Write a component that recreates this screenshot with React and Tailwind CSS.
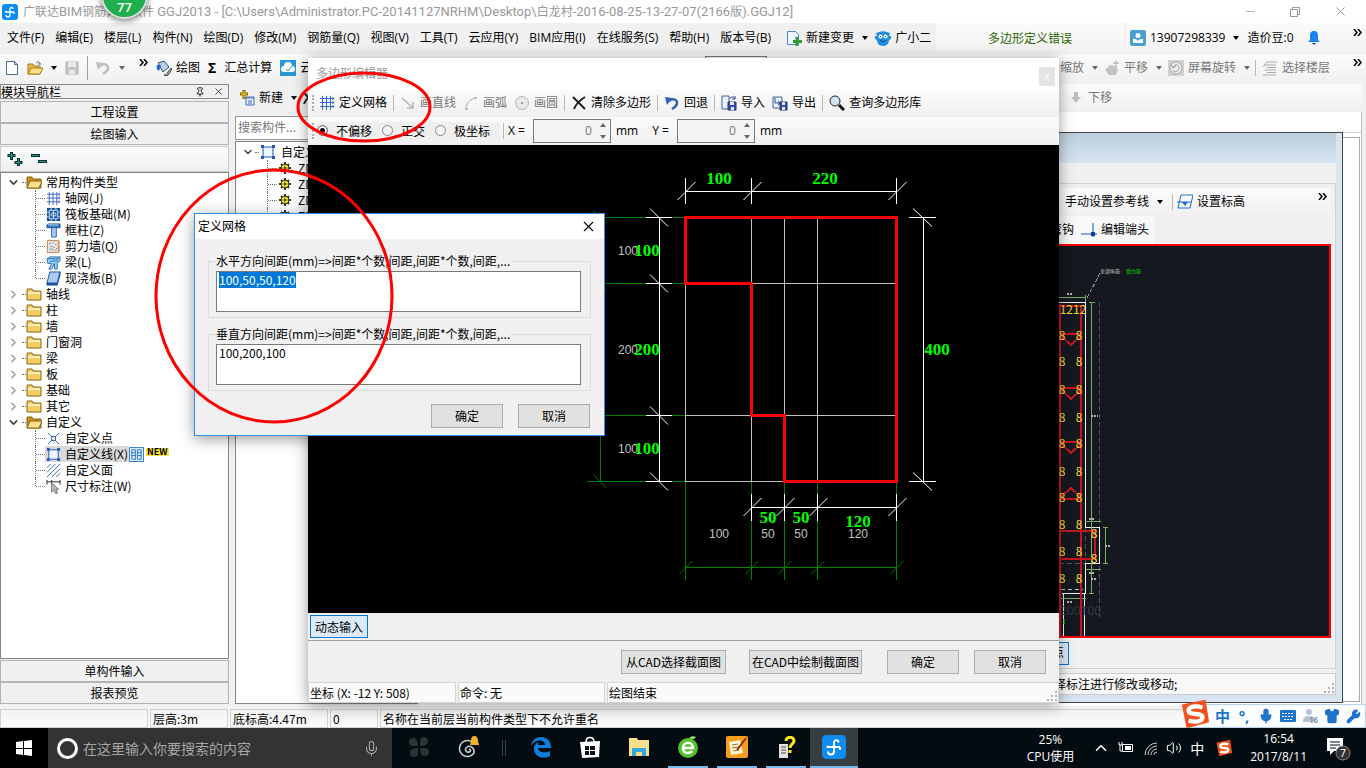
import { useEffect, useRef } from 'react'
import { ChevronDown, ChevronRight, ChevronUp, Mic, Minus, Pin, Shirt, Volume2, Wrench, X } from 'lucide-react'

const UI = "font-['Open_Sans','Noto_Sans_CJK_SC',sans-serif]"
const SONG = "font-['Noto_Sans_CJK_SC',sans-serif]"

const MENUS = [
  '文件(F)', '编辑(E)', '楼层(L)', '构件(N)', '绘图(D)', '修改(M)', '钢筋量(Q)', '视图(V)', '工具(T)',
  '云应用(Y)', 'BIM应用(I)', '在线服务(S)', '帮助(H)', '版本号(B)',
]

const TREE = [
  { label: '常用构件类型', open: true },
  { label: '轴网(J)', icon: 'grid' },
  { label: '筏板基础(M)', icon: 'raft' },
  { label: '框柱(Z)', icon: 'column' },
  { label: '剪力墙(Q)', icon: 'wall' },
  { label: '梁(L)', icon: 'beam' },
  { label: '现浇板(B)', icon: 'slab', last: true },
  { label: '轴线' },
  { label: '柱' },
  { label: '墙' },
  { label: '门窗洞' },
  { label: '梁' },
  { label: '板' },
  { label: '基础' },
  { label: '其它' },
  { label: '自定义', open: true },
  { label: '自定义点', icon: 'point' },
  { label: '自定义线(X)', icon: 'frame', active: true },
  { label: '自定义面', icon: 'hatch' },
  { label: '尺寸标注(W)', icon: 'dim', last: true },
]

/* ---------- icons ---------- */

function Svg({ size = 'size-4', children }) {
  return <svg viewBox="0 0 16 16" className={`${size} shrink-0`} fill="none">{children}</svg>
}

const ICONS = {
  grid: <path d="M3.500 1v14M7.500 1v14M11.500 1v14M1 3.500h14M1 7.500h14M1 11.500h14M14 2v3M14 6v3M14 10v3" stroke="#3a68c8" />,
  raft: (
    <>
      <path d="M1 1h14v14H1z" fill="#16509b" />
      <path d="M3.500 3.500h9v9h-9zM1 5.500h2M1 10.500h2M13 5.500h2M13 10.500h2M5.500 1v2M10.500 1v2M5.500 13v2M10.500 13v2M5.500 6.500h5v3h-5zM8 4v8" stroke="#d7e8fa" />
    </>
  ),
  column: (
    <>
      <path d="M1 2l2-1h12v4H1z" fill="#3a7cc4" stroke="#1b4f92" />
      <path d="M2 2h11" stroke="#bcdcf8" />
      <path d="M6 5h5v10H6z" fill="#a5cdf2" stroke="#2a64ab" />
    </>
  ),
  wall: (
    <>
      <path d="M1.500 1.500h12v13h-12z" fill="#e4e2e0" stroke="#c77c4c" />
      <path d="M4 5h1M7 4h1M10 6h1M5 8h1M8 9h1M4 11h1M7 12h1M11 10h1M10 12h1M6 10h1" stroke="#555" />
      <path d="M14 3v2M14 7v2M14 11v2" stroke="#d9904e" strokeWidth="2" />
    </>
  ),
  beam: (
    <>
      <path d="M1 4l3-2h11v4l-3 3v6h-3V9L6 15H3l3-6H2z" fill="#9bd0f3" stroke="#2a6fb5" />
      <path d="M2 4h10l3-2M12 4v4M4 7l7-1" stroke="#2a6fb5" />
    </>
  ),
  slab: (
    <>
      <path d="M4 1h11l-3 12H1z" fill="#a9c9f3" stroke="#1c4fa1" />
      <path d="M1 13h11v2H1zM15 1v3l-3 11" fill="#1c4fa1" stroke="#1c4fa1" />
    </>
  ),
  point: (
    <>
      <path d="M2 2l12 12M14 2L2 14" stroke="#2b62b8" />
      <path d="M6 6h4v4H6z" fill="#fff" stroke="#1a4fa0" />
    </>
  ),
  frame: (
    <>
      <path d="M3 3h10v10H3z" fill="#eef5ff" stroke="#1c58b8" />
      <path d="M1 1h3v3H1zM12 1h3v3h-3zM1 12h3v3H1zM12 12h3v3h-3z" fill="#1c58b8" />
    </>
  ),
  hatch: <path d="M1 5l4-4M1 10l9-9M1 15L15 1M6 15l9-9M11 15l4-4" stroke="#2a63bd" />,
  dim: (
    <>
      <path d="M1 1v5M6 1v4M15 1v5M1 3h14" stroke="#222" />
      <path d="M6 4v10l2.500-2 2 4 2-1-2-4h3z" fill="#bbb" stroke="#777" />
    </>
  ),
  newDoc: <path d="M2.500 1.500h8l3 3v10h-11zM10.500 1.500v3h3" fill="#fff" stroke="#4a6a92" />,
  open: (
    <>
      <path d="M1 4h5l1 2h6v8H1z" fill="#e9b84a" stroke="#a8781d" />
      <path d="M4 8h12l-3 6H1z" fill="#fbdf86" stroke="#a8781d" />
      <path d="M9 3c2-2 4-1 4 1M11 4h3" stroke="#4a6a92" />
    </>
  ),
  save: (
    <>
      <path d="M2 2h12v12H2z" fill="#c6c6c6" stroke="#b0b0b0" />
      <path d="M4 2h8v5H4zM5 10h6v4H5z" fill="#e9e9e9" />
    </>
  ),
  undoOff: (
    <>
      <path d="M5 6c3-3 8-2 8 2 0 3-2 4-5 6" stroke="#bdbdbd" strokeWidth="2.500" />
      <path d="M1 2l7 1-5 7z" fill="#bdbdbd" />
    </>
  ),
  undo: (
    <>
      <path d="M5 6c3-3 8-2 8 2 0 3-2 4-5 6" stroke="#2f62b5" strokeWidth="2.500" />
      <path d="M1 2l7 1-5 7z" fill="#2f62b5" />
    </>
  ),
  paint: (
    <>
      <path d="M2 3l6-2 5 6-6 5z" fill="#b9d0ea" stroke="#31507c" />
      <path d="M1 5c-1 3 0 5 2 6l2-6z" fill="#2766c4" />
      <path d="M8 15c2 0 3-1 4-3l3-4 1 1-3 5-2 2z" fill="#e3a83a" stroke="#31507c" />
    </>
  ),
  cloud: (
    <>
      <path d="M0 0h16v16H0z" fill="#2c94d8" />
      <path d="M4 12a3 3 0 010-6 4 4 0 018 0 3 3 0 010 6z" fill="#fff" />
      <path d="M6 9l2 2 4-5" stroke="#2c94d8" />
    </>
  ),
  create: (
    <>
      <path d="M5 0v9M1 4h8" stroke="#8a6d00" strokeWidth="3" />
      <path d="M5 1v7M2 4h6" stroke="#f6d21d" />
      <path d="M7 7h8v8H7z" fill="#e6f0ff" stroke="#3d6fbe" />
      <path d="M7 8h8M9 11h4M9 13h4" stroke="#3d6fbe" />
    </>
  ),
  cross: <path d="M2 2c3 3 7 7 12 12M14 2C9 5 5 9 3 14" stroke="#222" strokeWidth="2" />,
  arrowLine: <path d="M2 3l11 10M13 7v6H7" stroke="#b5b5b5" strokeWidth="1.500" />,
  arc: (
    <>
      <path d="M3 14C3 8 7 4 13 3" stroke="#aaa" />
      <path d="M2 13h3v2H2zM11 2h3v2h-3z" fill="#bbb" />
    </>
  ),
  circle: (
    <>
      <circle cx="8" cy="8" r="6.500" fill="#e9e9e9" stroke="#b5b5b5" />
      <path d="M7 8h2" stroke="#999" strokeWidth="2" />
    </>
  ),
  importIcon: (
    <>
      <path d="M1 1h7v13H1z" fill="#eaf2fc" stroke="#44618c" />
      <path d="M7 7h8v8H7z" fill="#3c4da8" stroke="#27347c" />
      <path d="M9 7h4v3H9zM10 12h3v3h-3z" fill="#dfe6f6" />
      <path d="M9 4c1-3 4-3 5 0M14 1v3h-3" stroke="#27508c" />
    </>
  ),
  exportIcon: (
    <>
      <path d="M1 2h9v11H1z" fill="#eaf2fc" stroke="#44618c" />
      <path d="M3 3v5h5M6 6l2 2-2 2" stroke="#27508c" />
      <path d="M8 7h7v8H8z" fill="#3c4da8" stroke="#27347c" />
      <path d="M10 7h3v3h-3zM10 12h3v3h-3z" fill="#dfe6f6" />
    </>
  ),
  search: (
    <>
      <circle cx="6" cy="6" r="5" fill="#cfe6f8" stroke="#222" />
      <path d="M10 10l5 5" stroke="#111" strokeWidth="3" />
    </>
  ),
  change: (
    <>
      <path d="M1.500 1.500h8l3 3v10h-11z" fill="#eef6ff" stroke="#4f87c0" />
      <path d="M11 7v9M7 11.500h9" stroke="#2f9f2f" strokeWidth="3" />
    </>
  ),
  owl: (
    <>
      <path d="M1 3l3-1c3-1 5-1 8 0l3 1-1 3h2v3l-2 1c0 3-2 6-6 6s-6-3-6-6L0 9V6h2z" fill="#1f8fe0" />
      <circle cx="5.500" cy="6.500" r="2" fill="#fff" />
      <circle cx="10.500" cy="6.500" r="2" fill="#fff" />
      <path d="M5 10c2 2 4 2 6 0M5 6.500h1M10 6.500h1" stroke="#0b3d70" />
    </>
  ),
  user: (
    <>
      <rect width="16" height="16" rx="2" fill="#4a9fd0" />
      <circle cx="8" cy="5.500" r="2.500" fill="#fff" />
      <path d="M3 13V9h3l2 2 2-2h3v4z" fill="#fff" />
    </>
  ),
  bell: (
    <>
      <path d="M8 1c3 0 4 2 4 5v4l2 2H2l2-2V6c0-3 1-5 4-5z" fill="#1b84f2" />
      <path d="M6 13h4l-2 2z" fill="#104f9b" />
    </>
  ),
  hand: (
    <>
      <path d="M3 8l3-3 6 1 2 4-2 5H5L1 10z" fill="#c4c4c4" />
      <path d="M12 0v7M9 3h6" stroke="#aaa" />
    </>
  ),
  rotate: (
    <>
      <path d="M0 0h16v16H0z" fill="#d0d0d0" />
      <circle cx="8" cy="8" r="6" fill="#ececec" stroke="#a8a8a8" />
      <path d="M5 10c0 3 6 2 6-2s-5-4-6-1M3 5l2 3 3-2" stroke="#9c9c9c" />
    </>
  ),
  layers: <path d="M2 5l3-3h10M3 5h11M5 7.500h9M3 10h11M5 12.500h9M1 15h13M2 5v2" stroke="#aaa" />,
  down: <path d="M6 2h4v5h3l-5 6-5-6h3z" fill="#bdbdbd" />,
  level: (
    <>
      <path d="M4 1h12l-3 13H1z" stroke="#1771c8" />
      <path d="M0 8h14" stroke="#1771c8" />
      <path d="M5 8h6l-3 4z" fill="#1771c8" />
    </>
  ),
  endpoint: (
    <>
      <path d="M0 12h16M12 1v14" stroke="#5b8fdc" strokeWidth="1.500" />
      <path d="M10 10h4v4h-4z" fill="#0d3f9c" />
    </>
  ),
  gear: (
    <>
      <path d="M8 2v12M2 8h12M4 4l8 8M12 4l-8 8" stroke="#333" strokeWidth="2" />
      <circle cx="8" cy="8" r="4" fill="#f5ea2c" stroke="#222" />
      <path d="M8 5v6M5 8h6" stroke="#8b8400" />
      <circle cx="8" cy="8" r="1" fill="#222" />
    </>
  ),
}

function Icon({ name, size }) {
  return <Svg size={size}>{ICONS[name]}</Svg>
}

function AppLogo({ size }) {
  return (
    <Svg size={size}>
      <rect width="16" height="16" rx="3" fill="#0b8ef0" />
      <path d="M11 5a1.500 1.500 0 00-3 0v6a2 2 0 01-4 0M3 8h9M12 8v2M4 8V7" stroke="#fff" strokeWidth="1.300" />
    </Svg>
  )
}

function Folder({ open }) {
  return (
    <svg viewBox="0 0 16 14" className="h-[14px] w-4 shrink-0" fill="none">
      <path d="M1 2h5l1 2h8v9H1z" fill={open ? '#c98f1e' : '#f5cf63'} stroke="#8a6516" />
      {open
        ? <path d="M4 6h12l-3 7H1z" fill="#fbe091" stroke="#8a6516" />
        : <path d="M2 6h12" stroke="#fdf0bd" strokeWidth="2" />}
    </svg>
  )
}

function Caret({ dim }) {
  return (
    <svg viewBox="0 0 6 4" className="h-1 w-[6px] shrink-0">
      <path d="M0 0h6L3 4z" fill={dim ? '#666' : '#000'} />
    </svg>
  )
}

function More() {
  return (
    <svg viewBox="0 0 9 7" className="h-[7px] w-[9px] shrink-0" fill="none">
      <path d="M1 0l3 3.500L1 7M5 0l3 3.500L5 7" stroke="#000" strokeWidth="1.500" />
    </svg>
  )
}

function Divider() {
  return <span className="-ml-px h-4 w-px shrink-0 bg-[#b8b8b8]" />
}

function Grip() {
  return <span className="h-4 w-[2px] shrink-0 border-l-2 border-dotted border-[#b0b0b0]" />
}

function ToolButton({ icon, label, disabled, caret }) {
  return (
    <button className={`flex shrink-0 items-center gap-1 whitespace-nowrap ${disabled ? 'text-[#777]' : 'text-black'}`}>
      <Icon name={icon} />
      {label}
      {caret && <span className="ml-1 flex"><Caret dim={disabled} /></span>}
    </button>
  )
}

function Resizer() {
  return (
    <svg viewBox="0 0 12 12" className="size-3 shrink-0 self-end" fill="#b5b5b5">
      <path d="M9 1h2v2H9zM5 5h2v2H5zM9 5h2v2H9zM1 9h2v2H1zM5 9h2v2H5zM9 9h2v2H9z" />
    </svg>
  )
}

/* ---------- main window ---------- */

function TitleBar() {
  return (
    <header className="relative flex h-[23px] shrink-0 items-center bg-white pl-[2px] text-[13px] text-[#999]">
      <AppLogo />
      <h1 className="ml-[5px] flex-1 font-['Roboto','Noto_Sans_CJK_SC',sans-serif] whitespace-nowrap">
        <span className="text-[12px]">广联达</span>BIM<span className="text-[12px]">钢筋算量软件</span>
        {' '}GGJ2013 - [C:\Users\Administrator.PC-20141127NRHM\Desktop\
        <span className="text-[12px]">白龙村</span>-2016-08-25-13-27-07(2166
        <span className="text-[12px]">版</span>).GGJ12]
      </h1>
      <div className="flex items-center gap-8 pr-[18px]">
        <button aria-label="最小化"><Minus size={13} strokeWidth={1.500} /></button>
        <button aria-label="还原">
          <svg viewBox="0 0 12 12" className="size-3" fill="none" stroke="#999">
            <path d="M1.500 3.500h7v7h-7zM3.500 3.500v-2h7v7h-2" />
          </svg>
        </button>
        <button aria-label="关闭"><X size={15} strokeWidth={1.500} /></button>
      </div>
      <div className="absolute top-[-28px] left-[101px] flex size-[47px] items-end justify-center rounded-full border-2 border-[#ddd] bg-[#1fae4e] pb-[3px] text-[13px] leading-[14px] font-semibold text-white shadow-[0_2px_6px_rgba(0,0,0,0.5)]">
        77
      </div>
    </header>
  )
}

function MenuBar() {
  return (
    <nav className="flex h-[31px] shrink-0 items-center bg-[#f0f0f0] pb-px">
      <div className="flex shrink-0 items-center gap-[11px] pl-[7px] whitespace-nowrap">
        {MENUS.map(m => <button key={m}>{m}</button>)}
      </div>
      <div className="ml-[15px] flex shrink-0 items-center gap-[7px]">
        <ToolButton icon="change" label="新建变更" caret />
        <ToolButton icon="owl" label="广小二" />
      </div>
      <div className={`ml-[5px] flex h-full flex-1 items-center justify-center bg-linear-to-b from-[#fbfbfb] to-[#f2f2f2] text-[#2a6400] ${SONG}`}>
        多边形定义错误
      </div>
      <div className="ml-[2px] flex h-full w-[240px] shrink-0 items-center gap-3 bg-linear-to-b from-[#fbfbfb] to-[#f2f2f2] pr-1 pl-1">
        <ToolButton icon="user" label="13907298339" caret />
        <span className="-ml-1">造价豆:0</span>
        <button aria-label="通知"><Icon name="bell" /></button>
        <span className="mb-3 ml-auto"><More /></span>
      </div>
    </nav>
  )
}

function ToolBar() {
  return (
    <div className="flex h-[30px] shrink-0 items-center bg-linear-to-b from-[#fbfbfb] to-[#f0f0f0] pr-1 pb-[2px]">
      <div className="flex items-center gap-[7px] pl-1">
        <button aria-label="新建"><Icon name="newDoc" /></button>
        <button className="flex items-center gap-2" aria-label="打开"><Icon name="open" /><Caret /></button>
        <button aria-label="保存"><Icon name="save" /></button>
        <span className="h-6 w-px bg-[#a0a0a0]" />
        <button className="flex items-center gap-2" aria-label="撤销"><Icon name="undoOff" /><Caret dim /></button>
      </div>
      <span className="mb-3 ml-[14px]"><More /></span>
      <div className="ml-2 flex items-center gap-2">
        <ToolButton icon="paint" label="绘图" />
        <button className="flex items-center gap-2 whitespace-nowrap"><b className="text-sm">Σ</b>汇总计算</button>
        <ToolButton icon="cloud" label="云检查" />
      </div>
      <select aria-label="楼层" className="ml-auto h-6 w-[62px] border border-[#777] bg-white" />
      <div className="ml-[293px] flex w-[302px] shrink-0 items-center gap-[6px] whitespace-nowrap text-[#777]">
        <button className="flex items-center gap-2">缩放<Caret dim /></button>
        <ToolButton icon="hand" label="平移" caret disabled />
        <ToolButton icon="rotate" label="屏幕旋转" caret disabled />
        <Divider />
        <ToolButton icon="layers" label="选择楼层" disabled />
        <span className="mb-3 ml-auto"><More /></span>
      </div>
    </div>
  )
}

function TreeRow({ node }) {
  if (!node.icon) {
    return (
      <li className="flex h-4 items-center">
        <span className="flex w-[25px] items-center justify-end">
          {node.open
            ? <ChevronDown size={13} strokeWidth={3} color="#444" />
            : <ChevronRight size={13} strokeWidth={2.500} color="#999" />}
          <span className="ml-[2px] w-[4px] border-t border-dotted border-[#777]" />
        </span>
        <Folder open={node.open} />
        <span className="ml-1">{node.label}</span>
      </li>
    )
  }
  return (
    <li className="flex h-4 items-center pl-[34px]">
      <span className={`w-px self-start border-l border-dotted border-[#777] ${node.last ? 'h-2' : 'h-4'}`} />
      <span className="w-[9px] border-t border-dotted border-[#777]" />
      <span className={`flex h-4 items-center gap-1 px-px ${node.active ? 'bg-[#d9d9d9]' : ''}`}>
        <Icon name={node.icon} size="size-[15px]" />
        {node.label}
      </span>
      {node.active && (
        <>
          <Svg size="size-[15px]">
            <path d="M.5.5h15v15H.5z" fill="#d4eafc" stroke="#2f78c6" />
            <path d="M3 3h4v10H3zM9 3h4v10H9zM3 6h4M3 9h4M9 6h4M9 9h4" stroke="#2f78c6" />
          </Svg>
          <b className="mb-1 ml-[2px] bg-[#ffe23c] px-px text-[9px] leading-[8px]">NEW</b>
        </>
      )}
    </li>
  )
}

function Navigator() {
  const tab = 'h-[22px] shrink-0 border border-[#b4b4b4] bg-[#f0f0f0]'
  return (
    <aside className={`flex w-[229px] shrink-0 flex-col pb-[2px] ${SONG}`}>
      <div className="flex h-[15px] shrink-0 items-center border border-[#888] bg-[#f0f0f0] leading-3">
        <h2 className="flex-1">模块导航栏</h2>
        <button aria-label="固定"><Pin size={10} /></button>
        <button aria-label="关闭" className="mr-1 ml-2"><X size={11} strokeWidth={1.500} /></button>
      </div>
      <button className={`mt-[2px] ${tab}`}>工程设置</button>
      <button className={tab}>绘图输入</button>
      <div className="mt-px flex h-[26px] shrink-0 items-center gap-2 border border-[#ccc] bg-linear-to-b from-[#fbfbfb] to-[#f0f0f0] pl-[6px]">
        <button aria-label="全部展开">
          <Svg><path d="M4.500 1v8M.5 4.500h8M11.500 7v8M7.500 11.500h8" stroke="#0a2f2b" strokeWidth="3" /><path d="M4.500 2v6M1.500 4.500h6M11.500 8v6M8.500 11.500h6" stroke="#1f9a8c" /></Svg>
        </button>
        <button aria-label="全部折叠">
          <Svg><path d="M0 4.500h9M7 10.500h9" stroke="#0a2f2b" strokeWidth="3" /><path d="M1 4.500h7M8 10.500h7" stroke="#1f9a8c" /></Svg>
        </button>
      </div>
      <ul className="min-h-0 flex-1 overflow-hidden border border-[#82878f] bg-white pt-[1px] leading-4 whitespace-nowrap">
        {TREE.map((node, i) => <TreeRow key={i} node={node} />)}
      </ul>
      <button className={`mt-px ${tab}`}>单构件输入</button>
      <button className={tab}>报表预览</button>
    </aside>
  )
}

function ComponentList() {
  return (
    <section className={`ml-[6px] flex w-[183px] shrink-0 flex-col overflow-hidden pb-[2px] ${SONG}`}>
      <div className={`flex h-[28px] shrink-0 items-center gap-1 pb-px pl-1 ${UI}`}>
        <ToolButton icon="create" label="新建" caret />
        <button aria-label="删除"><Icon name="cross" /></button>
      </div>
      <input aria-label="搜索构件" placeholder="搜索构件..." className="mt-1 h-6 shrink-0 border border-[#999] bg-white px-[2px] pb-1 placeholder:text-[#777]" />
      <ul className="mt-px min-h-0 flex-1 border border-[#82878f] bg-white pt-[2px] pl-[6px] leading-4">
        <li className="flex h-4 items-center">
          <ChevronDown size={12} strokeWidth={3} color="#444" />
          <span className="mx-px w-1 border-t border-dotted border-[#777]" />
          <Icon name="frame" />
          <span className="ml-[5px]">自定义线</span>
        </li>
        {['ZDYX-1', 'ZDYX-2', 'ZDYX-3', 'ZDYX-4'].map(name => (
          <li key={name} className="flex h-4 items-center pl-[25px]">
            <span className="h-4 border-l border-dotted border-[#777]" />
            <span className="w-[9px] border-t border-dotted border-[#777]" />
            <Icon name="gear" />
            <span className="ml-[5px]">{name}</span>
          </li>
        ))}
      </ul>
    </section>
  )
}

function StatusBar() {
  const cell = 'h-[19px] border border-[#d0d0d0] pl-[2px]'
  return (
    <footer className={`flex h-[22px] shrink-0 items-end gap-[2px] bg-linear-to-b from-[#f0f0f0] to-[#fcfcfc] leading-[17px] whitespace-nowrap ${SONG}`}>
      <span className={`w-[148px] ${cell}`} />
      <span className={`w-[78px] ${cell}`}>层高:3m</span>
      <span className={`w-[98px] ${cell}`}>底标高:4.47m</span>
      <span className={`w-[48px] ${cell}`}>0</span>
      <span className={`flex-1 ${cell}`}>名称在当前层当前构件类型下不允许重名</span>
    </footer>
  )
}

/* ---------- section view window ---------- */

const EIGHTS = [336, 362, 390, 418, 444, 472, 498, 525, 552, 579]

function SectionDrawing() {
  return (
    <svg viewBox="1059 246 271 391" preserveAspectRatio="xMinYMin slice" className="h-full w-[271px]" fill="none" shapeRendering="crispEdges">
      <path d="M1099.500 302V617M1059 563.500h40M1085 527.500V563" stroke="#4a4f58" strokeDasharray="5 3" />
      <path d="M1100 273L1085 302" stroke="#999" strokeDasharray="4 2" />
      <path d="M1059 302.500h26.500V527.500h14V563.500h-14V593.500H1062M1063.500 593v44M1084.500 593v44" stroke="#f0f0f0" />
      <path d="M1059 297.500h27M1085.500 295v5M1091.500 302v291M1089 302.500h6M1089 593.500h5M1085 521.500h16M1085 569.500h16M1105.500 527v36M1103 527.500h5M1103 563.500h5M1059 598.500h27" stroke="#73b061" />
      <path d="M1061 589.500h22" stroke="#a7c4e8" strokeDasharray="4 3" />
      <path
        d="M1060 304v333M1081 306v331M1060 306h21M1060 334h21M1061 336l10 9 10-9M1060 388h21M1061 390l10 9 10-9M1060 442h21M1061 444l10 9 10-9M1060 499h21M1061 497l10-9 10 9M1060 531h35v28h-35"
        stroke="#c4151c"
        strokeWidth="2"
      />
      <g fill="#f4d93a" className={`text-[12px] ${SONG}`} textAnchor="middle">
        <text x="1073" y="314">1212</text>
        {EIGHTS.map(y => (
          <g key={y}>
            <text x="1062" y={y + 4}>8</text>
            <text x="1079" y={y + 4}>8</text>
          </g>
        ))}
        <text x="1094" y="538">8</text>
        <text x="1094" y="563">8</text>
      </g>
      <text x="1060" y="615" fill="#353b45" className="text-[12px]">200100</text>
      <text x="1100" y="273" fill="#ccc" className="text-[5px]">全部纵筋</text>
      <text x="1126" y="273" fill="#00e000" className="text-[5px]">受力筋</text>
      <path d="M1067 294h6M1091 416h7M1089 519h6M1089 573h6M1091 579h6M1105 546h6M1067 602h6" stroke="#bdb4a6" strokeWidth="2" strokeDasharray="2 1" />
      <path d="M1064 619v6" stroke="#0c0" strokeWidth="2" strokeDasharray="1 1" />
    </svg>
  )
}

function SectionWindow() {
  return (
    <section className="absolute top-[132px] right-[23px] bottom-[65px] left-[1000px] flex flex-col border border-[#444] bg-[#d7e4f2] pr-[6px] pb-[7px]">
      <div className="h-[30px] shrink-0 bg-linear-to-b from-[#bccddc] to-[#d7e4f2]" />
      <div className="flex min-h-0 flex-1 flex-col bg-[#f0f0f0] pt-5">
        <div className="flex min-h-0 flex-1 flex-col border border-[#d0d0d0] pr-1">
          <div className="mt-1 flex h-[28px] shrink-0 items-center gap-[10px] bg-linear-to-b from-[#fbfbfb] to-[#f0f0f0] pl-[63px] whitespace-nowrap">
            <button className="flex items-center gap-2">手动设置参考线<Caret /></button>
            <Divider />
            <span className="-ml-[6px]"><ToolButton icon="level" label="设置标高" /></span>
            <span className="mr-1 mb-3 ml-auto"><More /></span>
          </div>
          <div className="flex h-[28px] w-[152px] shrink-0 items-center gap-[7px] bg-[#f8f8f8] pl-[48px] whitespace-nowrap">
            <button>弯钩</button>
            <ToolButton icon="endpoint" label="编辑端头" />
          </div>
          <div className="min-h-0 flex-1 border-2 border-[#f00] bg-[#15181f] pl-[55px]">
            <SectionDrawing />
          </div>
          <div className="flex h-[30px] shrink-0 items-center">
            <button className="ml-2 h-[23px] w-[59px] border border-[#0078d7] bg-[#dceaf7] pr-1 text-right">标注点</button>
          </div>
        </div>
        <div className={`mt-1 flex h-[22px] shrink-0 items-center border border-[#ccc] bg-[#f8f8f8] pl-[52px] ${SONG}`}>
          <span className="flex-1">择标注进行修改或移动;</span>
          <Resizer />
        </div>
      </div>
    </section>
  )
}

/* ---------- polygon editor window ---------- */

const XS = [685.5, 751.5, 784.5, 817.5, 896.5]
const YS = [217.5, 283.5, 415.5, 481.5]

function PolygonCanvas() {
  return (
    <svg viewBox="308 145 751 468" className="size-full bg-black" fill="none">
      <g stroke="#c0c0c0" shapeRendering="crispEdges">
        {XS.map(x => <path key={x} d={`M${x} 217V481`} />)}
        {YS.map(y => <path key={y} d={`M685 ${y}H896`} />)}
      </g>
      <g stroke="#008000">
        {YS.map(y => <path key={y} d={`M587 ${y}H685M593 ${y - 7}l13 13`} />)}
        {XS.map(x => <path key={x} d={`M${x} 482V580M${x - 6} 574l13 -13`} />)}
        <path d="M600.500 217V482M685 567.500H897" />
      </g>
      <g stroke="#fff">
        <path d="M685 191.500H897M659.500 217V482M923.500 217V482M751 507.500H897" />
        {[XS[0], XS[1], XS[4]].map(x => <path key={x} d={`M${x} 178v26M${x - 8} 200l18 -18`} />)}
        {XS.slice(1).map(x => <path key={x} d={`M${x} 494v27M${x - 8} 516l18 -18`} />)}
        {YS.map(y => <path key={y} d={`M646 ${y}h26M650 ${y - 9}l18 18`} />)}
        {[YS[0], YS[3]].map(y => <path key={y} d={`M909 ${y}h27M913 ${y - 9}l19 18`} />)}
      </g>
      <path d="M685.500 217.500H896.500V481.500H784.500V415.500H751.500V283.500H685.500Z" stroke="#f00" strokeWidth="3" shapeRendering="crispEdges" />
      <g fill="#c0c0c0" textAnchor="middle" className="font-['Liberation_Sans',sans-serif] text-[12px]">
        <text x="628" y="255">100</text>
        <text x="628" y="354">200</text>
        <text x="628" y="453">100</text>
        <text x="719" y="538">100</text>
        <text x="768" y="538">50</text>
        <text x="801" y="538">50</text>
        <text x="858" y="538">120</text>
      </g>
      <g fill="#0f0" textAnchor="middle" className="font-['Liberation_Serif',serif] text-[17px] font-bold">
        <text x="719" y="184">100</text>
        <text x="825" y="184">220</text>
        <text x="647" y="256">100</text>
        <text x="647" y="355">200</text>
        <text x="647" y="454">100</text>
        <text x="937" y="355">400</text>
        <text x="768" y="523">50</text>
        <text x="801" y="523">50</text>
        <text x="858" y="527">120</text>
      </g>
    </svg>
  )
}

function OffsetField({ label, id }) {
  return (
    <>
      <label htmlFor={id} className="whitespace-pre">{label} =</label>
      <span className="ml-2 flex h-6 w-[78px] items-center border border-[#7a7a7a] bg-[#f4f4f4] pr-1">
        <input id={id} defaultValue="0" className="w-full min-w-0 pr-2 text-right text-[#777]" />
        <span className="flex flex-col gap-2">
          <button aria-label="增加" className="rotate-180"><Caret dim /></button>
          <button aria-label="减少"><Caret dim /></button>
        </span>
      </span>
      <span className="mr-[14px] ml-[5px]">mm</span>
    </>
  )
}

function OffsetMode({ label, checked }) {
  return (
    <label className="mr-[10px] flex items-center gap-2 whitespace-nowrap">
      <input
        type="radio"
        name="offset"
        defaultChecked={checked}
        className="size-[11px] appearance-none rounded-full border border-[#888] bg-[#f4f4f4] checked:bg-black checked:shadow-[inset_0_0_0_2px_#fff]"
      />
      {label}
    </label>
  )
}

function PolygonEditor() {
  const btn = 'h-6 border border-[#adadad] bg-[#e1e1e1] whitespace-nowrap'
  const cell = 'border border-[#d4d4d4] bg-[#fafafa] pl-px'
  return (
    <section className="absolute top-[58px] right-[307px] bottom-[65px] left-[308px] flex flex-col bg-[#f0f0f0] shadow-[0_2px_14px_rgba(0,0,0,0.4)]">
      <div className="flex h-[32px] shrink-0 items-center justify-between bg-white pr-1 pl-2 text-[#999]">
        <h2>多边形编辑器</h2>
        <button aria-label="关闭编辑器" className="mt-1 h-[19px] w-4 bg-[#e4e4e4] text-[10px] text-white">x</button>
      </div>
      <div className="flex h-[27px] shrink-0 items-center gap-[7px] bg-linear-to-b from-[#fbfbfb] to-[#f0f0f0] pb-[2px] pl-1">
        <Grip />
        <span className="-ml-[2px]"><ToolButton icon="grid" label="定义网格" /></span>
        <Divider />
        <span className="-ml-px"><ToolButton icon="arrowLine" label="画直线" disabled /></span>
        <ToolButton icon="arc" label="画弧" disabled />
        <ToolButton icon="circle" label="画圆" disabled />
        <Divider />
        <span className="-ml-px"><ToolButton icon="cross" label="清除多边形" /></span>
        <Divider />
        <span className="-ml-px"><ToolButton icon="undo" label="回退" /></span>
        <Divider />
        <span className="-ml-px"><ToolButton icon="importIcon" label="导入" /></span>
        <ToolButton icon="exportIcon" label="导出" />
        <Divider />
        <span className="-ml-px"><ToolButton icon="search" label="查询多边形库" /></span>
      </div>
      <div className="flex h-[28px] shrink-0 items-center bg-linear-to-b from-[#fbfbfb] to-[#f0f0f0] pb-px pl-1">
        <Grip />
        <div className={`ml-[3px] flex h-[18px] items-center bg-[#efefef] ${SONG}`}>
          <OffsetMode label="不偏移" checked />
          <OffsetMode label="正交" />
          <OffsetMode label="极坐标" />
        </div>
        <span className="mr-1 ml-[3px] h-4 w-px bg-[#b8b8b8]" />
        <OffsetField label="X" id="offset-x" />
        <OffsetField label="Y" id="offset-y" />
      </div>
      <div className="min-h-0 flex-1 overflow-hidden">
        <PolygonCanvas />
      </div>
      <div className="flex h-[28px] shrink-0 items-center border-b border-[#a0a0a0] pl-[2px]">
        <button className={`h-[23px] w-[58px] border border-[#0078d7] bg-[#dceaf7] whitespace-nowrap ${SONG}`}>动态输入</button>
      </div>
      <div className={`flex h-[41px] shrink-0 items-center justify-end pr-[13px] ${SONG}`}>
        <button className={`mr-[23px] w-[105px] ${btn}`}>从CAD选择截面图</button>
        <button className={`mr-[25px] w-[113px] ${btn}`}>在CAD中绘制截面图</button>
        <button className={`mr-[15px] w-[72px] ${btn}`}>确定</button>
        <button className={`w-[72px] ${btn}`}>取消</button>
      </div>
      <div className={`flex h-[21px] shrink-0 gap-[2px] leading-[19px] ${SONG}`}>
        <span className={`w-[148px] ${cell}`}>坐标 (X: -12 Y: 508)</span>
        <span className={`w-[147px] ${cell}`}>命令: 无</span>
        <span className={`flex flex-1 justify-between ${cell}`}>绘图结束<Resizer /></span>
      </div>
    </section>
  )
}

/* ---------- grid dialog ---------- */

function SpacingField({ id, label, value, inputRef }) {
  return (
    <fieldset className="h-[65px] border border-[#dcdcdc] pr-[9px] pl-[7px]">
      <legend className="leading-4 whitespace-nowrap">
        <label htmlFor={id}>{label}</label>
      </legend>
      <textarea
        ref={inputRef}
        id={id}
        defaultValue={value}
        className="mt-[2px] block h-[41px] w-full resize-none border border-[#7a7a7a] bg-white px-[2px] leading-4 outline-none selection:bg-[#0078d7] selection:text-white"
      />
    </fieldset>
  )
}

function GridDialog() {
  const first = useRef(null)

  useEffect(() => {
    first.current.focus()
    first.current.select()
  }, [])

  const btn = 'h-6 w-[72px] border border-[#adadad] bg-[#e1e1e1]'
  return (
    <section role="dialog" aria-label="定义网格" className={`absolute top-[213px] left-[194px] flex w-[411px] flex-col border border-[#3390ea] bg-[#f0f0f0] pb-[7px] shadow-[0_3px_14px_rgba(0,0,0,0.4)] ${SONG}`}>
      <div className="flex h-[25px] items-center justify-between bg-white pr-[7px] pb-px pl-[3px]">
        <h2>定义网格</h2>
        <button aria-label="关闭对话框"><X size={17} strokeWidth={1.500} /></button>
      </div>
      <div className="flex flex-col gap-2 px-[13px] pt-[14px]">
        <SpacingField id="spacing-h" inputRef={first} value="100,50,50,120" label="水平方向间距(mm)=>间距*个数,间距,间距*个数,间距,..." />
        <SpacingField id="spacing-v" value="100,200,100" label="垂直方向间距(mm)=>间距*个数,间距,间距*个数,间距,..." />
      </div>
      <div className="mt-[13px] flex justify-end gap-[15px] pr-[14px]">
        <button className={btn}>确定</button>
        <button className={btn}>取消</button>
      </div>
    </section>
  )
}

/* ---------- input method bar and taskbar ---------- */

function SogouLogo({ size }) {
  return (
    <svg viewBox="0 0 26 26" className={`${size} shrink-0`} fill="none">
      <path d="M2 5l20-4 3 19-19 5z" fill="#f2501c" stroke="#f2501c" strokeWidth="2" strokeLinejoin="round" />
      <path d="M20 7C14 5 7 6 7 10c0 5 13 1 13 6 0 4-7 5-13 3" stroke="#fff" strokeWidth="4" />
    </svg>
  )
}

function InputMethodBar() {
  return (
    <div className="absolute right-0 bottom-10 flex h-6 items-center gap-[6px] border border-[#b9d3ea] bg-[#fbfdff] pr-1 text-[#1c74cc]">
      <span className="-mt-1 -ml-2"><SogouLogo size="size-7" /></span>
      <button className="text-[15px] font-bold">中</button>
      <button aria-label="标点" className="w-4 text-[15px] leading-3 font-bold">°,</button>
      <button aria-label="语音"><Mic size={16} fill="#1c74cc" /></button>
      <button aria-label="软键盘">
        <svg viewBox="0 0 16 12" className="h-3 w-4" fill="none">
          <rect width="16" height="12" rx="1" fill="#1c74cc" />
          <path d="M2 3.500h12M2 6.500h12M4 9.500h8" stroke="#fff" strokeDasharray="2 1" />
        </svg>
      </button>
      <button aria-label="账号">
        <svg viewBox="0 0 16 16" className="size-4">
          <circle cx="7" cy="4" r="3" fill="#b4c3d6" />
          <path d="M1 14c0-5 2-6 6-6s6 1 6 6z" fill="#b4c3d6" />
          <text x="7" y="15" fill="#8699b2" className="text-[8px] font-bold">16</text>
        </svg>
      </button>
      <button aria-label="皮肤"><Shirt size={16} fill="#1c74cc" /></button>
      <button aria-label="设置"><Wrench size={15} fill="#1c74cc" /></button>
    </div>
  )
}

const TASKS = [
  {
    name: 'Pinwheel',
    art: <path d="M10 10H5a4 4 0 010-8c4 0 5 3 5 8zM12 10V5a4 4 0 018 0c0 4-3 5-8 5zM12 12h5a4 4 0 010 8c-4 0-5-3-5-8zM10 12v5a4 4 0 01-8 0c0-4 3-5 8-5z" fill="#2c3236" />,
  },
  {
    name: 'Spiral',
    art: (
      <>
        <path d="M17 8A8 8 0 1017 17c1-5-4-8-7-6s-1 6 2 5 1-3 0-3" stroke="#c9cdd0" strokeWidth="1.500" />
        <path d="M17 0c3 0 4 2 4 5l1 4h-9l1-4c0-3 1-5 3-5z" fill="#f0b323" />
      </>
    ),
  },
  {
    name: 'Edge',
    art: <path d="M1 10C2 4 6 1 11 1c7 0 10 5 10 11H8c0 4 7 6 12 3v5c-8 4-16 0-16-7 0-4 2-6 5-7-1 1-1 2-1 3h7c0-5-9-7-14 1z" fill="#0f7de0" />,
  },
  {
    name: 'Store',
    art: (
      <>
        <path d="M1 6l20-1-1 16-17 1z" fill="#fff" />
        <path d="M7 6c0-6 8-6 8 0" stroke="#fff" strokeWidth="1.500" />
        <path d="M6 10h4v4H6zM11 10h5v4h-5zM6 15h4v4H6zM11 15h5v4h-5z" fill="#061015" />
      </>
    ),
  },
  {
    name: 'Explorer',
    art: (
      <>
        <path d="M1 2h8l1 2h11v16H1z" fill="#fbe08a" />
        <path d="M4 20v-8h14v8h-4v-4H8v4z" fill="#35a8e0" />
      </>
    ),
  },
  {
    name: 'Browser',
    run: true,
    art: (
      <>
        <circle cx="11" cy="12" r="10" fill="#56c22b" />
        <path d="M6 12h10c0-7-10-7-10 0 0 6 7 6 9 3" stroke="#fff" strokeWidth="2.500" />
        <path d="M12 2c2-2 5-2 7-1-1 2-4 3-7 1z" fill="#8ee05b" />
      </>
    ),
  },
  {
    name: 'Notes',
    run: true,
    art: (
      <>
        <rect width="22" height="22" rx="2" fill="#f59d1c" />
        <path d="M3 6l11-2 3 13-12 2z" fill="#fff5d8" />
        <path d="M6 9l6-1M6 12l7-1M7 15l6-1" stroke="#b06a1b" />
        <path d="M20 2l-9 12" stroke="#8c2d12" strokeWidth="2" />
      </>
    ),
  },
  {
    name: 'Help',
    run: true,
    art: (
      <>
        <path d="M4 8h9v14H4z" fill="#e2e2e2" />
        <path d="M6 11h5M6 14h5M6 17h5" stroke="#555" />
        <path d="M11 5c0-5 8-5 8 0 0 3-4 3-4 7M15 14v3" stroke="#ffe81a" strokeWidth="3" />
      </>
    ),
  },
]

function Taskbar() {
  return (
    <footer className="flex h-10 shrink-0 items-stretch bg-[#030c10] text-white">
      <button aria-label="开始" className="flex w-12 items-center justify-center bg-black">
        <Svg><path d="M0 2l7-1v7H0zM8 1l8-1v8H8zM0 9h7v6l-7-1zM8 9h8v7l-8-1z" fill="#fff" /></Svg>
      </button>
      <div className="flex w-[344px] items-center bg-[#333] pr-3 pl-[9px]">
        <span className="size-[21px] shrink-0 rounded-full border-[3px] border-white" />
        <input
          aria-label="搜索"
          placeholder="在这里输入你要搜索的内容"
          className="ml-[5px] min-w-0 flex-1 text-[14px] outline-none placeholder:text-[#a5a5a5]"
        />
        <Mic size={17} strokeWidth={1.500} color="#aaa" />
      </div>
      <div className="ml-[2px] flex items-stretch">
        {TASKS.slice(0, 2).map(t => <TaskButton key={t.name} task={t} />)}
        <span className="mx-[10px] h-4 w-1 self-center border-x border-[#3a4246]" />
        {TASKS.slice(2).map(t => <TaskButton key={t.name} task={t} />)}
        <button aria-label="GGJ2013" className="flex w-12 items-center justify-center border-b-2 border-[#76b9ed] bg-[#373d41]">
          <AppLogo size="size-6" />
        </button>
      </div>
      <div className="ml-auto flex items-center pr-[15px]">
        <div className="mr-[18px] text-center leading-[17px]">
          <p>25%</p>
          <p>CPU使用</p>
        </div>
        <div className="flex items-center gap-2">
          <ChevronUp size={18} strokeWidth={2} />
          <Svg>
            <path d="M4.500 4.500h10v7h-10z" stroke="#fff" />
            <path d="M7 6h6v4H7z" fill="#fff" />
            <path d="M1 2v3h3V2M2 5v6h2" stroke="#fff" />
          </Svg>
          <Svg>
            <path d="M3 15A12 12 0 0115 3M6 15a9 9 0 019-9M9 15a6 6 0 016-6M12 15a3 3 0 013-3" stroke="#ccc" />
          </Svg>
          <Volume2 size={16} strokeWidth={1.500} />
          <span className="mr-1 text-[14px]">中</span>
          <SogouLogo size="size-4" />
        </div>
        <div className="mx-[18px] text-center leading-[18px]">
          <p>16:54</p>
          <p>2017/8/11</p>
        </div>
        <button aria-label="通知中心" className="relative">
          <svg viewBox="0 0 26 26" className="size-[26px]" fill="none">
            <path d="M2 3h16v13H9l-4 4v-4H2z" fill="#fff" />
            <path d="M5 7h10M5 10h10M5 13h6" stroke="#030c10" />
            <circle cx="18" cy="18" r="7" fill="#333" stroke="#888" />
            <text x="18" y="22" textAnchor="middle" fill="#fff" className="text-[11px]">7</text>
          </svg>
        </button>
      </div>
    </footer>
  )
}

function TaskButton({ task }) {
  return (
    <button aria-label={task.name} className="flex w-[49px] items-center justify-center">
      <span className={`flex h-full w-10 items-center justify-center border-b-2 ${task.run ? 'border-[#76b9ed]' : 'border-transparent'}`}>
        <svg viewBox="0 0 22 22" className="size-[22px]" fill="none">{task.art}</svg>
      </span>
    </button>
  )
}

export default function App() {
  return (
    <div className={`relative flex h-screen flex-col overflow-hidden bg-[#f0f0f0] text-[12px] text-black ${UI}`}>
      <TitleBar />
      <MenuBar />
      <ToolBar />
      <main className="flex min-h-0 flex-1">
        <Navigator />
        <ComponentList />
        <section className="flex min-w-0 flex-1 flex-col pr-1">
          <div className="flex h-[28px] shrink-0 items-center justify-end bg-linear-to-b from-[#fbfbfb] to-[#f0f0f0] pr-[250px]">
            <ToolButton icon="down" label="下移" disabled />
          </div>
          <div className="min-h-0 flex-1 border-r border-[#bbb] bg-white pt-[20px] pb-1">
            <div className="h-full border-t border-[#ccc] pt-1 pr-px">
              <div className="h-full border border-[#aaa]" />
            </div>
          </div>
        </section>
      </main>
      <StatusBar />
      <Taskbar />

      <SectionWindow />
      <PolygonEditor />
      <GridDialog />
      <InputMethodBar />

      {/* markup circles */}
      <svg className="pointer-events-none absolute inset-0 size-full" fill="none" stroke="#f00" strokeWidth="3">
        <ellipse cx="364" cy="107" rx="66" ry="34" />
        <ellipse cx="274" cy="296" rx="118" ry="126" />
      </svg>
    </div>
  )
}
